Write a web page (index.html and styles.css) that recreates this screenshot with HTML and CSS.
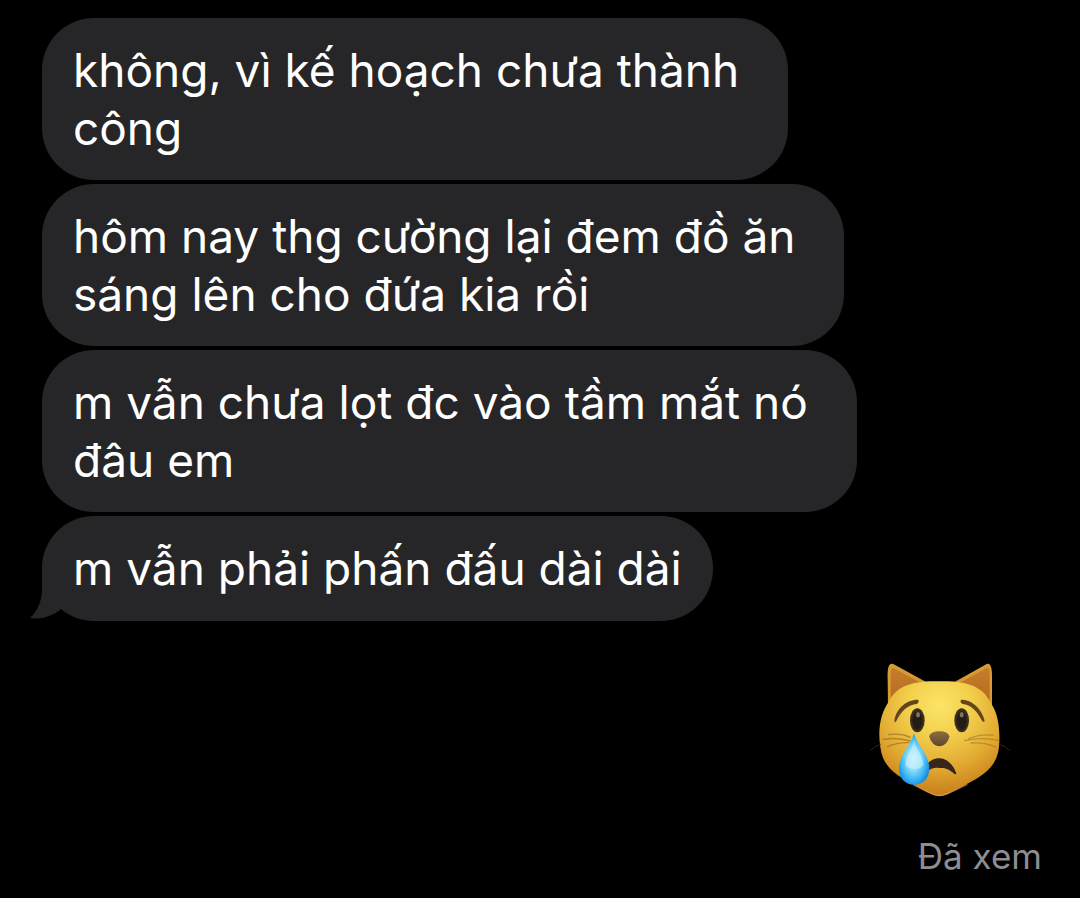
FILE: index.html
```html
<!DOCTYPE html>
<html lang="vi">
<head>
    <meta charset="UTF-8">
    <meta name="viewport" content="width=device-width, initial-scale=1.0">
    <title>Tin nhắn</title>

    <link rel="stylesheet" href="styles.css">
</head>
<body>

    <main class="chat">
        <div class="received">
            <p class="bubble wrapped">không, vì kế hoạch chưa thành<br>công</p>
            <p class="bubble wrapped">hôm nay thg cường lại đem đồ ăn<br>sáng lên cho đứa kia rồi</p>
            <p class="bubble wrapped">m vẫn chưa lọt đc vào tầm mắt nó<br>đâu em</p>
            <p class="bubble">m vẫn phải phấn đấu dài dài
                <svg class="tail" viewBox="0 0 36 54" aria-hidden="true">
                    <path d="M12 0V23C12 36 8 45 0 53C11 55 22 51 30 45L36 36V0Z"/>
                </svg>
            </p>
        </div>

        <div class="sent">
            <svg class="emoji" viewBox="0 0 480 480" role="img" aria-label="Mèo khóc">
                <defs>
                    <radialGradient id="face" gradientUnits="userSpaceOnUse" cx="238" cy="165" r="265">
                        <stop offset="0" stop-color="#fce467"/>
                        <stop offset="0.35" stop-color="#f3d04d"/>
                        <stop offset="0.7" stop-color="#e2ab32"/>
                        <stop offset="1" stop-color="#c9821c"/>
                    </radialGradient>
                    <linearGradient id="ear" x1="0" y1="0" x2="0" y2="1">
                        <stop offset="0" stop-color="#c57d2b"/>
                        <stop offset="1" stop-color="#b56b24"/>
                    </linearGradient>
                    <linearGradient id="nose" x1="0" y1="0" x2="0" y2="1">
                        <stop offset="0" stop-color="#8d6e40"/>
                        <stop offset="1" stop-color="#5e452b"/>
                    </linearGradient>
                    <radialGradient id="tear" cx="0.48" cy="0.5" r="0.55">
                        <stop offset="0" stop-color="#c8f0ff"/>
                        <stop offset="0.4" stop-color="#8bdcfb"/>
                        <stop offset="0.75" stop-color="#38b5f5"/>
                        <stop offset="1" stop-color="#188be0"/>
                    </radialGradient>
                    <filter id="soft">
                        <feGaussianBlur stdDeviation="2"/>
                    </filter>
                </defs>

                <g filter="url(#soft)">
                    <!-- ears -->
                    <path fill="#d69c33" d="M84 174L83 90Q80 34 100 42L205 100ZM396 174L396 92Q398 34 380 42L277 100Z"/>
                    <path fill="url(#ear)" d="M92 153L92 70Q92 49 105 56L182 98Q125 111 92 153ZM389 152L389 70Q389 49 376 56L298 99Q356 110 389 152Z"/>

                    <!-- head -->
                    <path fill="url(#face)" d="M238 94C315 91 370 108 390 156C416 188 421 243 417 290C411 350 372 376 319 403C279 423 259 438 238 438C217 438 189 418 151 398C96 369 67 342 61 291C53 237 61 192 86 155C109 108 158 91 238 94Z"/>
                    <path fill="none" stroke="#f1ad63" stroke-width="4" opacity="0.6" d="M160 405C199 422 216 437 238 437C260 437 281 421 322 403"/>

                    <!-- whiskers -->
                    <g fill="none" stroke-linecap="round">
                        <path stroke="#9e6c24" stroke-width="4" opacity="0.7" d="M86 254Q122 249 151 262M70 268Q112 261 151 273M83 290Q112 277 145 278"/>
                        <path stroke="#9e7425" stroke-width="4" opacity="0.6" d="M326 266Q361 251 399 256M314 272Q362 260 416 271M334 279Q374 277 408 291"/>
                        <path stroke="#33240f" stroke-width="3" d="M61 283Q44 288 33 300M418 283Q437 288 448 301"/>
                    </g>

                    <!-- brows and eyes -->
                    <path fill="#65441e" d="M103 213C107 180 135 149 174 149Q180 155 170 162C145 165 124 181 109 213Q104 220 103 213ZM374 213C368 181 339 149 304 149Q297 155 308 162C332 164 352 183 365 211Q371 219 374 213Z"/>
                    <ellipse cx="172" cy="211" rx="22" ry="36" fill="#3a2e1d"/>
                    <ellipse cx="305" cy="211" rx="22" ry="36" fill="#3a2e1d"/>
                    <ellipse cx="172" cy="212" rx="15" ry="28" fill="#271f19"/>
                    <ellipse cx="305" cy="212" rx="15" ry="28" fill="#271f19"/>
                    <ellipse cx="174" cy="194" rx="6" ry="8" fill="#80735e"/>
                    <ellipse cx="305" cy="194" rx="6" ry="8" fill="#80735e"/>

                    <!-- nose and mouth -->
                    <path fill="url(#nose)" d="M208 259C210 249 223 244 238 244C255 244 266 250 268 259C267 274 252 289 238 289C224 289 210 274 208 259Z"/>
                    <path fill="#39251a" d="M192 362C198 338 218 325 238 325C260 325 280 344 289 370Q287 376 279 368C259 353 251 354 238 354C222 352 207 358 198 369Q190 373 192 362Z"/>

                    <!-- tear -->
                    <path fill="url(#tear)" d="M162 250C171 286 207 314 208 354C208 386 189 404 162 404C134 404 116 383 117 353C119 316 151 287 162 250Z"/>
                    <path fill="#d9f6ff" opacity="0.5" d="M162 267C164 299 193 317 190 346C181 361 144 361 136 344C137 316 159 300 162 267Z"/>
                </g>
            </svg>
            <p class="status">Đã xem</p>
        </div>
    </main>

</body>
</html>
```

FILE: styles.css
```css
body {
    margin: 0;
    background-color: #000;
    color: #fff;
    font-family: "Inter", sans-serif;
}

.chat {
    display: flex;
    flex-direction: column;
    gap: 29px;
    padding: 18px 38px 18px 42px;
}

.received {
    display: flex;
    flex-direction: column;
    align-items: flex-start;
    gap: 4px;
}

.bubble {
    position: relative;
    margin: 0;
    padding: 23px 31px 24px;
    border-radius: 52px;
    background-color: #262628;
    font-size: 46px;
    line-height: 58px;
}

.bubble.wrapped {
    padding: 23px 49px 23px 31px;
}

.tail {
    position: absolute;
    left: -12px;
    bottom: 2px;
    width: 36px;
    height: 54px;
    fill: #262628;
}

.sent {
    display: flex;
    flex-direction: column;
    align-items: flex-end;
    gap: 24px;
}

.emoji {
    width: 160px;
    height: 160px;
    margin-right: 22px;
}

.status {
    margin: 0;
    color: #8d8d92;
    font-size: 35px;
    line-height: 44px;
}
```
